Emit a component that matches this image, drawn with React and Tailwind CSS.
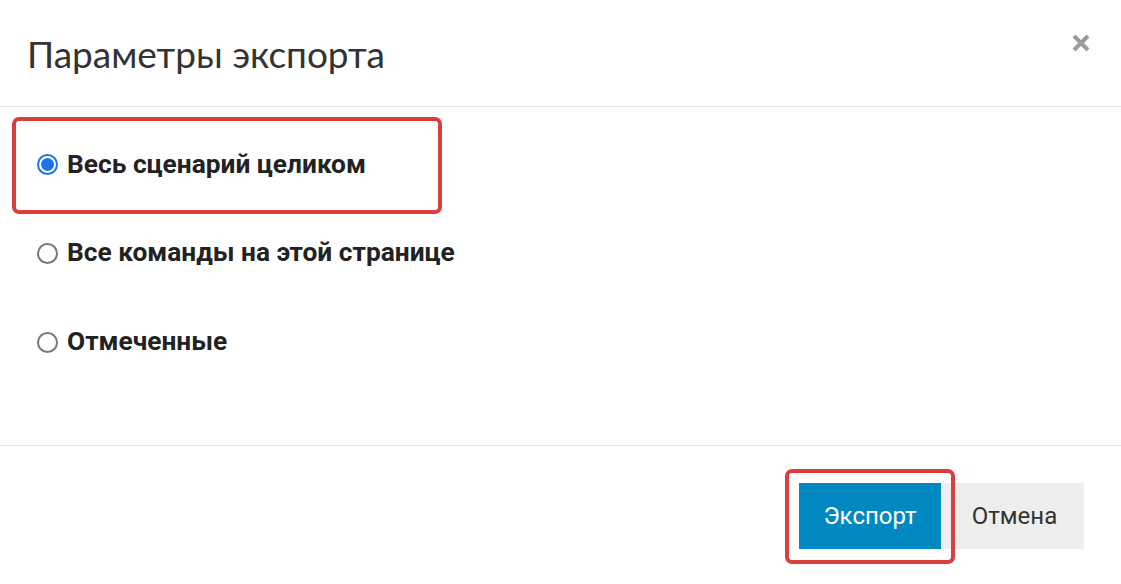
import React, { useState } from "react";

const options = [
  { id: "all", label: "Весь сценарий целиком" },
  { id: "page", label: "Все команды на этой странице" },
  { id: "marked", label: "Отмеченные" },
];

function Radio({ checked }) {
  return checked ? (
    <span className="w-[21px] h-[21px] rounded-full border-[2px] border-[#1a73e8] flex items-center justify-center shrink-0">
      <span className="w-[13px] h-[13px] rounded-full bg-[#1a73e8]"></span>
    </span>
  ) : (
    <span className="w-[21px] h-[21px] rounded-full border-[2px] border-[#777] shrink-0"></span>
  );
}

function Option({ item, checked, onSelect }) {
  return (
    <label
      onClick={() => onSelect(item.id)}
      className="flex items-center gap-[9px] cursor-pointer"
    >
      <Radio checked={checked} />
      <span className="text-[26.3px] font-bold text-[#222]">{item.label}</span>
    </label>
  );
}

export default function App() {
  const [selected, setSelected] = useState("all");

  return (
    <div
      className="w-[1121px] h-[584px] bg-white flex flex-col overflow-hidden"
      style={{ fontFamily: "Roboto, 'Liberation Sans', sans-serif" }}
    >
      {/* Header */}
      <div className="h-[107px] flex items-center justify-between pl-[27px] pr-[30px] border-b border-[#e5e5e5] shrink-0">
        <h2
          className="text-[37px] text-[#333] leading-none"
          style={{ fontFamily: "Lato, 'Open Sans', sans-serif" }}
        >
          Параметры экспорта
        </h2>
        <button className="w-[20px] h-[20px] mb-[20px] text-[#9a9a9a]" title="Закрыть">
          <svg viewBox="0 0 20 20" className="w-full h-full">
            <path d="M3 3 L17 17 M17 3 L3 17" stroke="currentColor" strokeWidth="4" />
          </svg>
        </button>
      </div>

      {/* Body */}
      <div className="flex-1 pt-[10px] pl-[12px]">
        <div className="w-[430px] h-[97px] border-[4px] border-[#d8403a] rounded-[7px] flex items-center pl-[21px] pb-[2px]">
          <Option item={options[0]} checked={selected === "all"} onSelect={setSelected} />
        </div>
        <div className="pl-[25px] mt-[24px] h-[30px] flex items-center">
          <Option item={options[1]} checked={selected === "page"} onSelect={setSelected} />
        </div>
        <div className="pl-[25px] mt-[59px] h-[30px] flex items-center">
          <Option item={options[2]} checked={selected === "marked"} onSelect={setSelected} />
        </div>
      </div>

      {/* Footer */}
      <div className="h-[139px] border-t border-[#e5e5e5] flex justify-end pt-[37px] pr-[37px] shrink-0">
        <div className="relative flex h-[66px]">
          <div className="absolute left-[-14px] top-[-14px] w-[170px] h-[95px] border-[4px] border-[#d8403a] rounded-[7px]"></div>
          <button className="w-[142px] h-[66px] bg-[#0288c0] text-white text-[24px]">
            Экспорт
          </button>
          <button className="w-[143px] h-[66px] bg-[#eeeeee] text-[#333] text-[24px] pl-[4px]">
            Отмена
          </button>
        </div>
      </div>
    </div>
  );
}
